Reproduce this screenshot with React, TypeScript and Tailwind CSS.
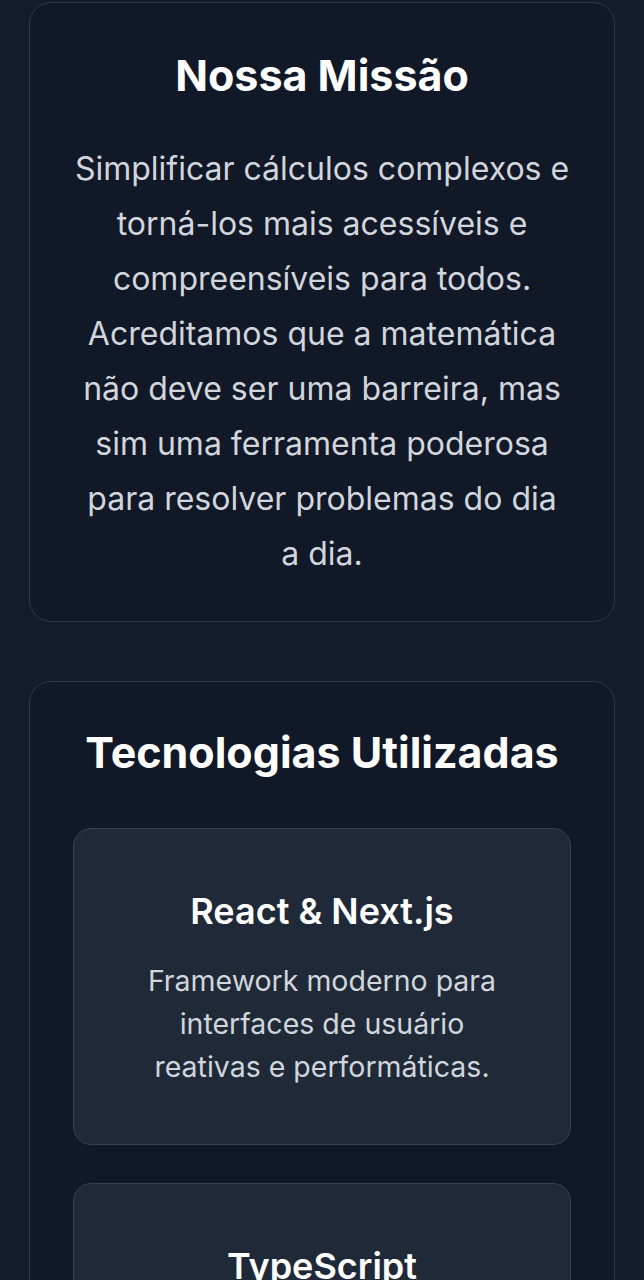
const techs = [
  {
    title: "React & Next.js",
    desc: "Framework moderno para interfaces de usuário reativas e performáticas.",
  },
  {
    title: "TypeScript",
    desc: "Tipagem estática para um código mais seguro e fácil de manter.",
  },
];

export default function App() {
  return (
    <div className="min-h-screen bg-[#141b2d] px-[29px] pt-[2px] pb-10 font-['Inter',sans-serif]">
      {/* MISSAO */}
      <section className="rounded-[22px] border border-[#2f3848] bg-[#111827] px-[44px] pt-[48px] pb-[40px] text-center">
        <h2 className="text-[43px] font-bold leading-[48px] text-white">
          Nossa Missão
        </h2>
        <p className="mt-[42px] text-[32px] leading-[55px] text-gray-300">
          Simplificar cálculos complexos e torná-los mais acessíveis e
          compreensíveis para todos. Acreditamos que a matemática não deve ser
          uma barreira, mas sim uma ferramenta poderosa para resolver problemas
          do dia a dia.
        </p>
      </section>

      {/* TECNOLOGIAS */}
      <section className="mt-[59px] rounded-[22px] border border-[#2f3848] bg-[#111827] px-[43px] pt-[46px] pb-[44px] text-center">
        <h2 className="text-[43px] font-bold leading-[48px] text-white">
          Tecnologias Utilizadas
        </h2>
        <div className="mt-[52px] flex flex-col gap-[38px]">
          {techs.map((t) => (
            <div
              key={t.title}
              className="rounded-[18px] border border-[#374151] bg-[#1f2937] px-[56px] pt-[62px] pb-[56px]"
            >
              <h3 className="text-[36px] font-semibold leading-[40px] text-white">
                {t.title}
              </h3>
              <p className="mt-[28px] text-[28.5px] leading-[43px] text-gray-300">
                {t.desc}
              </p>
            </div>
          ))}
        </div>
      </section>
    </div>
  );
}
